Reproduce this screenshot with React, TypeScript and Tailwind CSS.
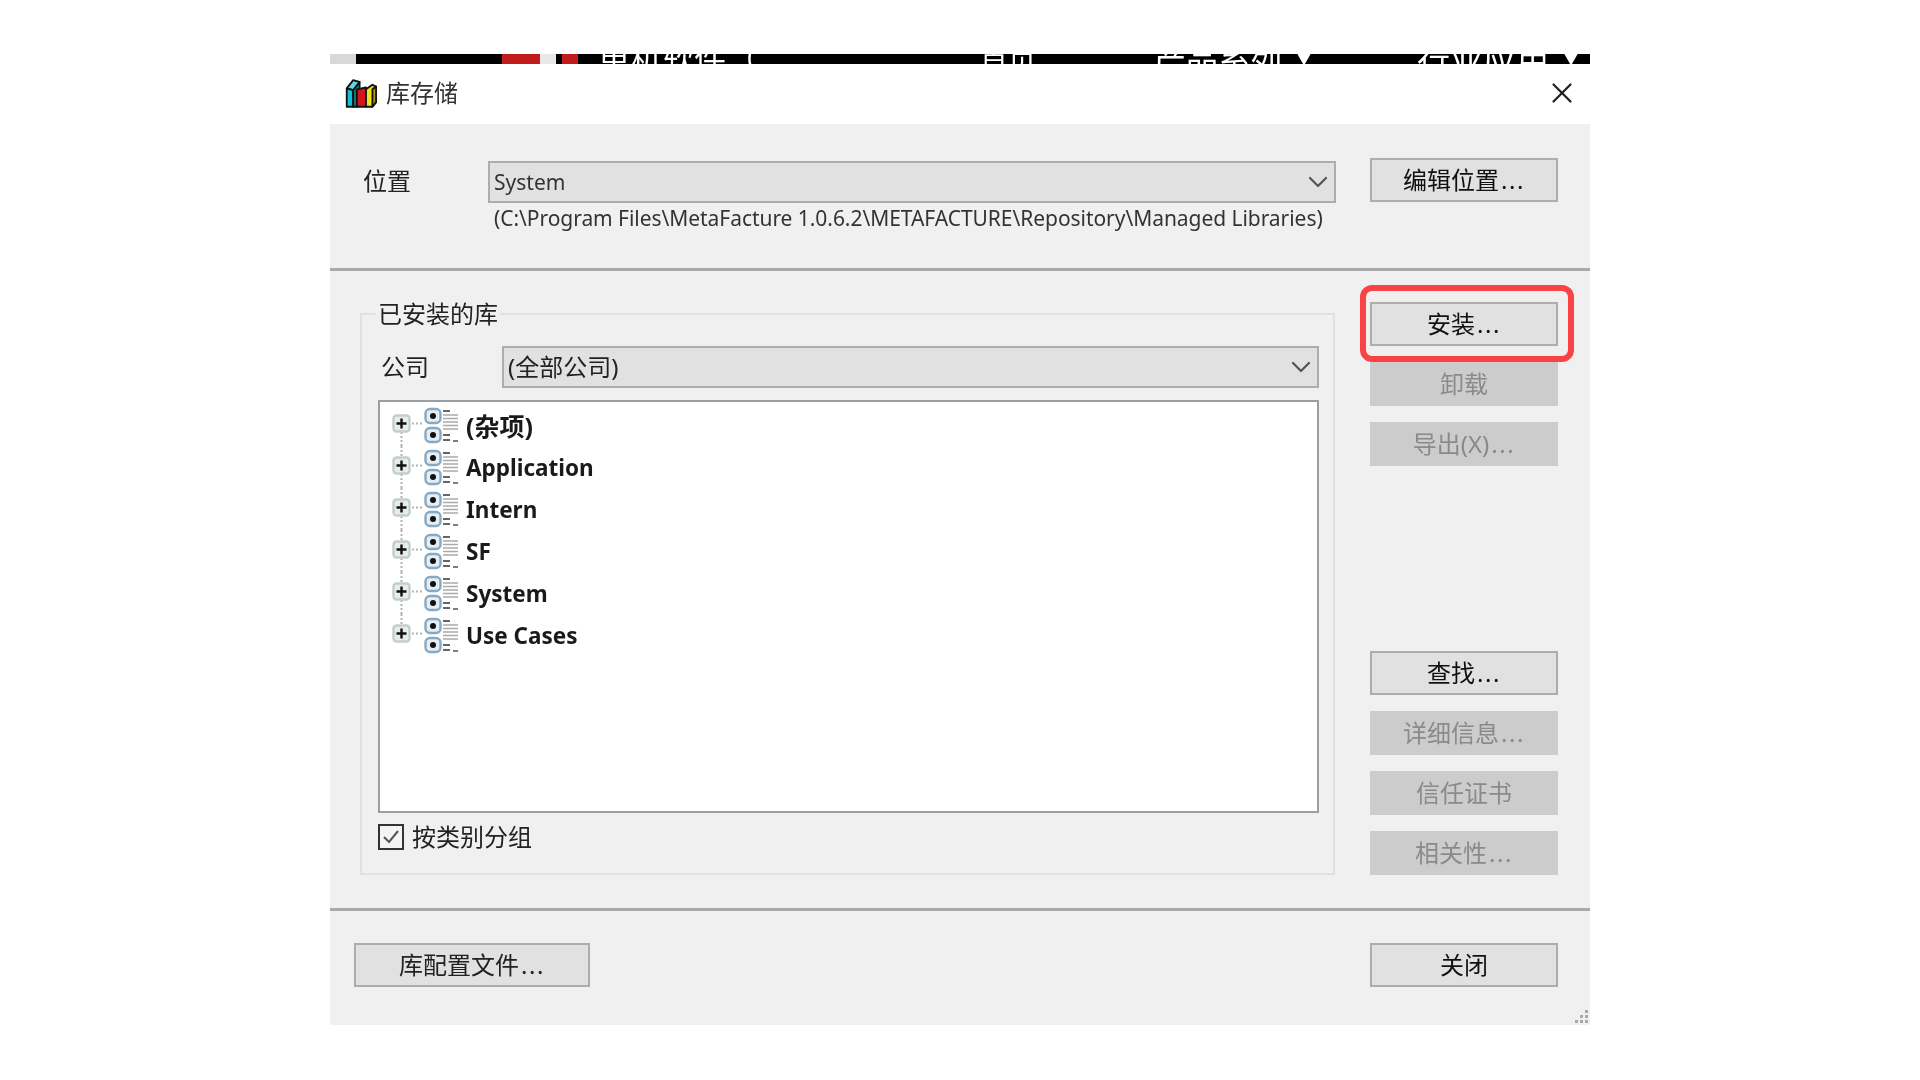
import { ChevronDown, X } from "lucide-react";

const FONT = "font-['Noto_Sans','Noto_Sans_CJK_SC',sans-serif]";

const TREE_ITEMS = ["(杂项)", "Application", "Intern", "SF", "System", "Use Cases"];

function BooksIcon() {
  return (
    <svg width="33" height="34" viewBox="0 0 36 36" className="shrink-0">
      <g stroke="#111" strokeWidth="2" strokeLinejoin="round">
        <polygon points="3,13 10,4 17,6 10,15" fill="#5fd6e4" />
        <polygon points="3,13 10,15 10,33 3,33" fill="#12c3d6" />
        <polygon points="10,15 17,6 17,14 14,33 10,33" fill="#0a7f8c" />
        <polygon points="14,14 24,12 24,33 14,33" fill="#d4141c" />
        <polygon points="24,14 31,9 35,11 35,28 31,33 24,33" fill="#f2e21a" />
        <polygon points="31,14 35,11 35,28 31,33" fill="#a89a08" />
      </g>
    </svg>
  );
}

function TreeGlyph({ first, last }: { first: boolean; last: boolean }) {
  const bullet = (cy: number) => (
    <g>
      <rect x="33.5" y={cy - 7} width="15" height="14" rx="4.5" fill="#e6eef4" stroke="#86a9c4" strokeWidth="2.4" />
      <circle cx="41" cy={cy} r="3" fill="#111" />
    </g>
  );
  return (
    <svg width="68" height="42" viewBox="0 0 68 42" className="shrink-0">
      {!last && <line x1="9.5" y1="28" x2="9.5" y2="42" stroke="#b4b4b4" strokeWidth="2" strokeDasharray="2 2" />}
      {!first && <line x1="9.5" y1="0" x2="9.5" y2="10" stroke="#b4b4b4" strokeWidth="2" strokeDasharray="2 2" />}
      <line x1="20" y1="19.5" x2="30" y2="19.5" stroke="#b4b4b4" strokeWidth="2" strokeDasharray="2 2" />
      <rect x="1.5" y="11.5" width="16" height="16" rx="3" fill="#e8ecea" stroke="#c2d0ca" strokeWidth="2.4" />
      <path d="M4.5 19.5h10M9.5 14.5v10" stroke="#111" strokeWidth="2.4" />
      {bullet(12)}
      {bullet(31)}
      <g strokeWidth="1.5">
        <path d="M51 7h7" stroke="#333" />
        <path d="M51 11h15M51 14.5h15M51 18h15M51 21.5h15M51 25h15" stroke="#aaa" />
        <path d="M51 31h7M51 36h7" stroke="#333" />
        <path d="M61 37h5" stroke="#555" />
      </g>
    </svg>
  );
}

function ButtonLabel({ label }: { label: string }) {
  if (!label.endsWith("...")) return <>{label}</>;
  return (
    <>
      {label.slice(0, -3)}
      <span className="ml-[2px] tracking-[1.5px]">...</span>
    </>
  );
}

function WinButton({ label, disabled }: { label: string; disabled?: boolean }) {
  return (
    <button
      className={`flex h-[44px] w-[188px] items-center justify-center border-2 text-[24px] leading-none ${
        disabled
          ? "border-[#cccccc] bg-[#cccccc] text-[#8a8a8a]"
          : "border-[#adadad] bg-[#e1e1e1] text-[#111111]"
      }`}
    >
      <ButtonLabel label={label} />
    </button>
  );
}

function WinSelect({ value, width, large }: { value: string; width: string; large?: boolean }) {
  return (
    <div className={`flex h-[42px] items-center justify-between border-2 border-[#adadad] bg-[#e1e1e1] pl-1 ${width}`}>
      <span className={large ? "text-[24px] leading-none text-[#222]" : "text-[21px] leading-none text-[#333]"}>{value}</span>
      <ChevronDown size={32} strokeWidth={1.7} className="text-[#555]" />
    </div>
  );
}

export default function App() {
  return (
    <div className={`min-h-screen bg-white pl-[330px] pt-[54px] ${FONT}`}>
      <div className="relative w-[1260px] blur-[0.5px]">
        {/* sliver of the page behind the dialog */}
        <div className="flex h-[10px] items-center overflow-hidden bg-black text-[32px] leading-none text-white">
          <div className="h-full w-[26px] shrink-0 bg-[#d8d8d8]" />
          <div className="h-full w-[146px] shrink-0" />
          <div className="h-full w-[38px] shrink-0 bg-[#c01c1c]" />
          <div className="h-full w-[16px] shrink-0 bg-[#e8e8e8]" />
          <div className="h-full w-[6px] shrink-0" />
          <div className="h-full w-[16px] shrink-0 bg-[#c01c1c]" />
          <span className="ml-[20px] w-[160px] shrink-0 whitespace-nowrap">单机软件（</span>
          <span className="ml-[222px] w-[57px] shrink-0 whitespace-nowrap text-[28px]">首页</span>
          <span className="ml-[117px] w-[128px] shrink-0 whitespace-nowrap">产品系列</span>
          <span className="ml-[15px] w-[14px] shrink-0 text-[14px]">▼</span>
          <span className="ml-[106px] w-[135px] shrink-0 whitespace-nowrap text-[33px]">行业应用</span>
          <span className="ml-[12px] w-[14px] shrink-0 text-[14px]">▼</span>
        </div>

        <div className="flex h-[60px] items-center bg-white pb-[2px] pl-[14px] pr-[11px]">
          <BooksIcon />
          <span className="ml-[9px] text-[24px] text-[#333]">库存储</span>
          <X size={34} strokeWidth={1.6} className="ml-auto text-[#222]" />
        </div>

        <div className="flex h-[147px] border-b-[3px] border-[#a8a8a8] bg-[#f0f0f0] pl-[33px] pt-[34px]">
          <div className="w-[125px] pt-[5px] text-[24px] leading-[36px] text-[#222]">位置</div>
          <div className="w-[848px] pt-[3px]">
            <WinSelect value="System" width="w-[848px]" />
            <div className="ml-[6px] whitespace-nowrap text-[21px] leading-[30px] tracking-[-0.05px] text-[#333]">
              (C:\Program Files\MetaFacture 1.0.6.2\METAFACTURE\Repository\Managed Libraries)
            </div>
          </div>
          <div className="ml-[34px]">
            <WinButton label="编辑位置..." />
          </div>
        </div>

        <div className="flex h-[640px] border-b-[3px] border-[#a8a8a8] bg-[#f0f0f0] pl-[30px]">
          <fieldset className="mt-[25px] h-[579px] w-[975px] border-2 border-[#e0e0e0] pl-[16px] pr-[14px]">
            <legend className="ml-[-2px] px-[2px] text-[24px] leading-[36px] text-[#222]">已安装的库</legend>
            <div className="mt-[14px] flex h-[42px] items-center">
              <div className="w-[124px] pl-[3px] text-[24px] leading-none text-[#222]">公司</div>
              <WinSelect value="(全部公司)" width="w-[817px]" large />
            </div>
            <div className="mt-[12px] h-[413px] w-[941px] border-2 border-[#9a9fa6] bg-white pl-[12px] pt-[2px]">
              {TREE_ITEMS.map((item, i) => (
                <div key={item} className="flex h-[42px] items-center">
                  <TreeGlyph first={i === 0} last={i === TREE_ITEMS.length - 1} />
                  <span className={`ml-[6px] pt-[3px] font-bold leading-none text-[#1a1a1a] ${i === 0 ? "text-[25px]" : "text-[22.5px]"}`}>{item}</span>
                </div>
              ))}
            </div>
            <label className="mt-[11px] flex items-center">
              <span className="flex h-[26px] w-[26px] items-center justify-center border-2 border-[#333] bg-[#f4f4f4]">
                <svg width="20" height="20" viewBox="0 0 20 20">
                  <path d="M3 10l5 5 9-11" fill="none" stroke="#555" strokeWidth="2" />
                </svg>
              </span>
              <span className="ml-[8px] text-[24px] leading-none text-[#222]">按类别分组</span>
            </label>
          </fieldset>
          <div className="ml-[35px] flex w-[188px] flex-col pt-[31px]">
            <WinButton label="安装..." />
            <div className="mt-[16px] flex flex-col gap-[16px]">
              <WinButton label="卸载" disabled />
              <WinButton label="导出(X)..." disabled />
            </div>
            <div className="mt-[185px] flex flex-col gap-[16px]">
              <WinButton label="查找..." />
              <WinButton label="详细信息..." disabled />
              <WinButton label="信任证书" disabled />
              <WinButton label="相关性..." disabled />
            </div>
          </div>
        </div>

        <div className="relative flex h-[114px] items-start justify-between bg-[#f0f0f0] pl-[24px] pr-[32px] pt-[32px]">
          <button className="flex h-[44px] w-[236px] items-center justify-center border-2 border-[#adadad] bg-[#e1e1e1] text-[24px] leading-none text-[#222]">
            <ButtonLabel label="库配置文件..." />
          </button>
          <WinButton label="关闭" />
          <svg width="16" height="16" viewBox="0 0 16 16" className="absolute bottom-0 right-0">
            <g fill="#a8a8a8">
              <rect x="11" y="1" width="3" height="3" />
              <rect x="6" y="6" width="3" height="3" />
              <rect x="11" y="6" width="3" height="3" />
              <rect x="1" y="11" width="3" height="3" />
              <rect x="6" y="11" width="3" height="3" />
              <rect x="11" y="11" width="3" height="3" />
            </g>
          </svg>
        </div>

        {/* red annotation around the install button */}
        <div className="absolute left-[1030px] top-[231px] h-[77px] w-[214px] rounded-[12px] border-[6px] border-[#f84444]" />
      </div>
    </div>
  );
}
